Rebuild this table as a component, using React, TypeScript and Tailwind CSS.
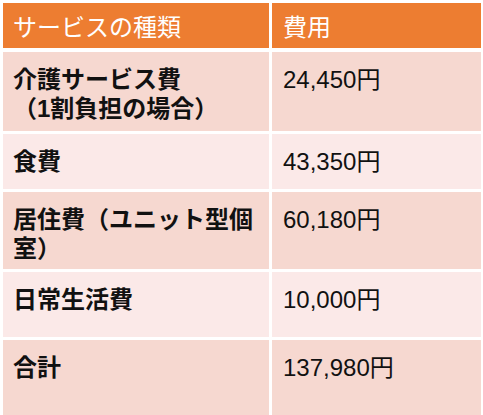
const rows = [
  { label: ["介護サービス費", "（1割負担の場合）"], cost: "24,450円", h: "h-[79px]", dark: true },
  { label: ["食費"], cost: "43,350円", h: "h-[55px]", dark: false },
  { label: ["居住費（ユニット型個室）"], cost: "60,180円", h: "h-[77px]", dark: true },
  { label: ["日常生活費"], cost: "10,000円", h: "h-[65px]", dark: false },
  { label: ["合計"], cost: "137,980円", h: "h-[80px]", dark: true },
];

export default function App() {
  return (
    <div
      className="h-[415px] w-[483px] overflow-hidden bg-white pl-[3px] pt-[3px]"
      style={{ fontFamily: '"Liberation Sans", "Noto Sans CJK JP", sans-serif' }}
    >
      <div className="grid w-[478px] grid-cols-[266px_209px] gap-x-[3px]">
        <div className="h-[45px] bg-[#ed7d31] pl-[10px] pt-[10px] text-[24px] leading-[29px] text-white">
          サービスの種類
        </div>
        <div className="h-[45px] bg-[#ed7d31] pl-[11px] pt-[10px] text-[24px] leading-[29px] text-white">
          費用
        </div>
      </div>
      <div className="mt-[4px] flex flex-col gap-[3px]">
        {rows.map((r) => (
          <div key={r.cost} className="grid w-[478px] grid-cols-[266px_209px] gap-x-[3px]">
            <div
              className={`${r.h} ${r.dark ? "bg-[#f6d8d0]" : "bg-[#fbe9e8]"} pl-[10px] pr-[8px] pt-[13px] text-[24px] font-bold leading-[29px] text-[#111]`}
            >
              {r.label.map((l) => (
                <div key={l}>{l}</div>
              ))}
            </div>
            <div
              className={`${r.h} ${r.dark ? "bg-[#f6d8d0]" : "bg-[#fbe9e8]"} pl-[11px] pt-[13px] text-[24px] leading-[29px] text-[#111]`}
            >
              {r.cost}
            </div>
          </div>
        ))}
      </div>
    </div>
  );
}
